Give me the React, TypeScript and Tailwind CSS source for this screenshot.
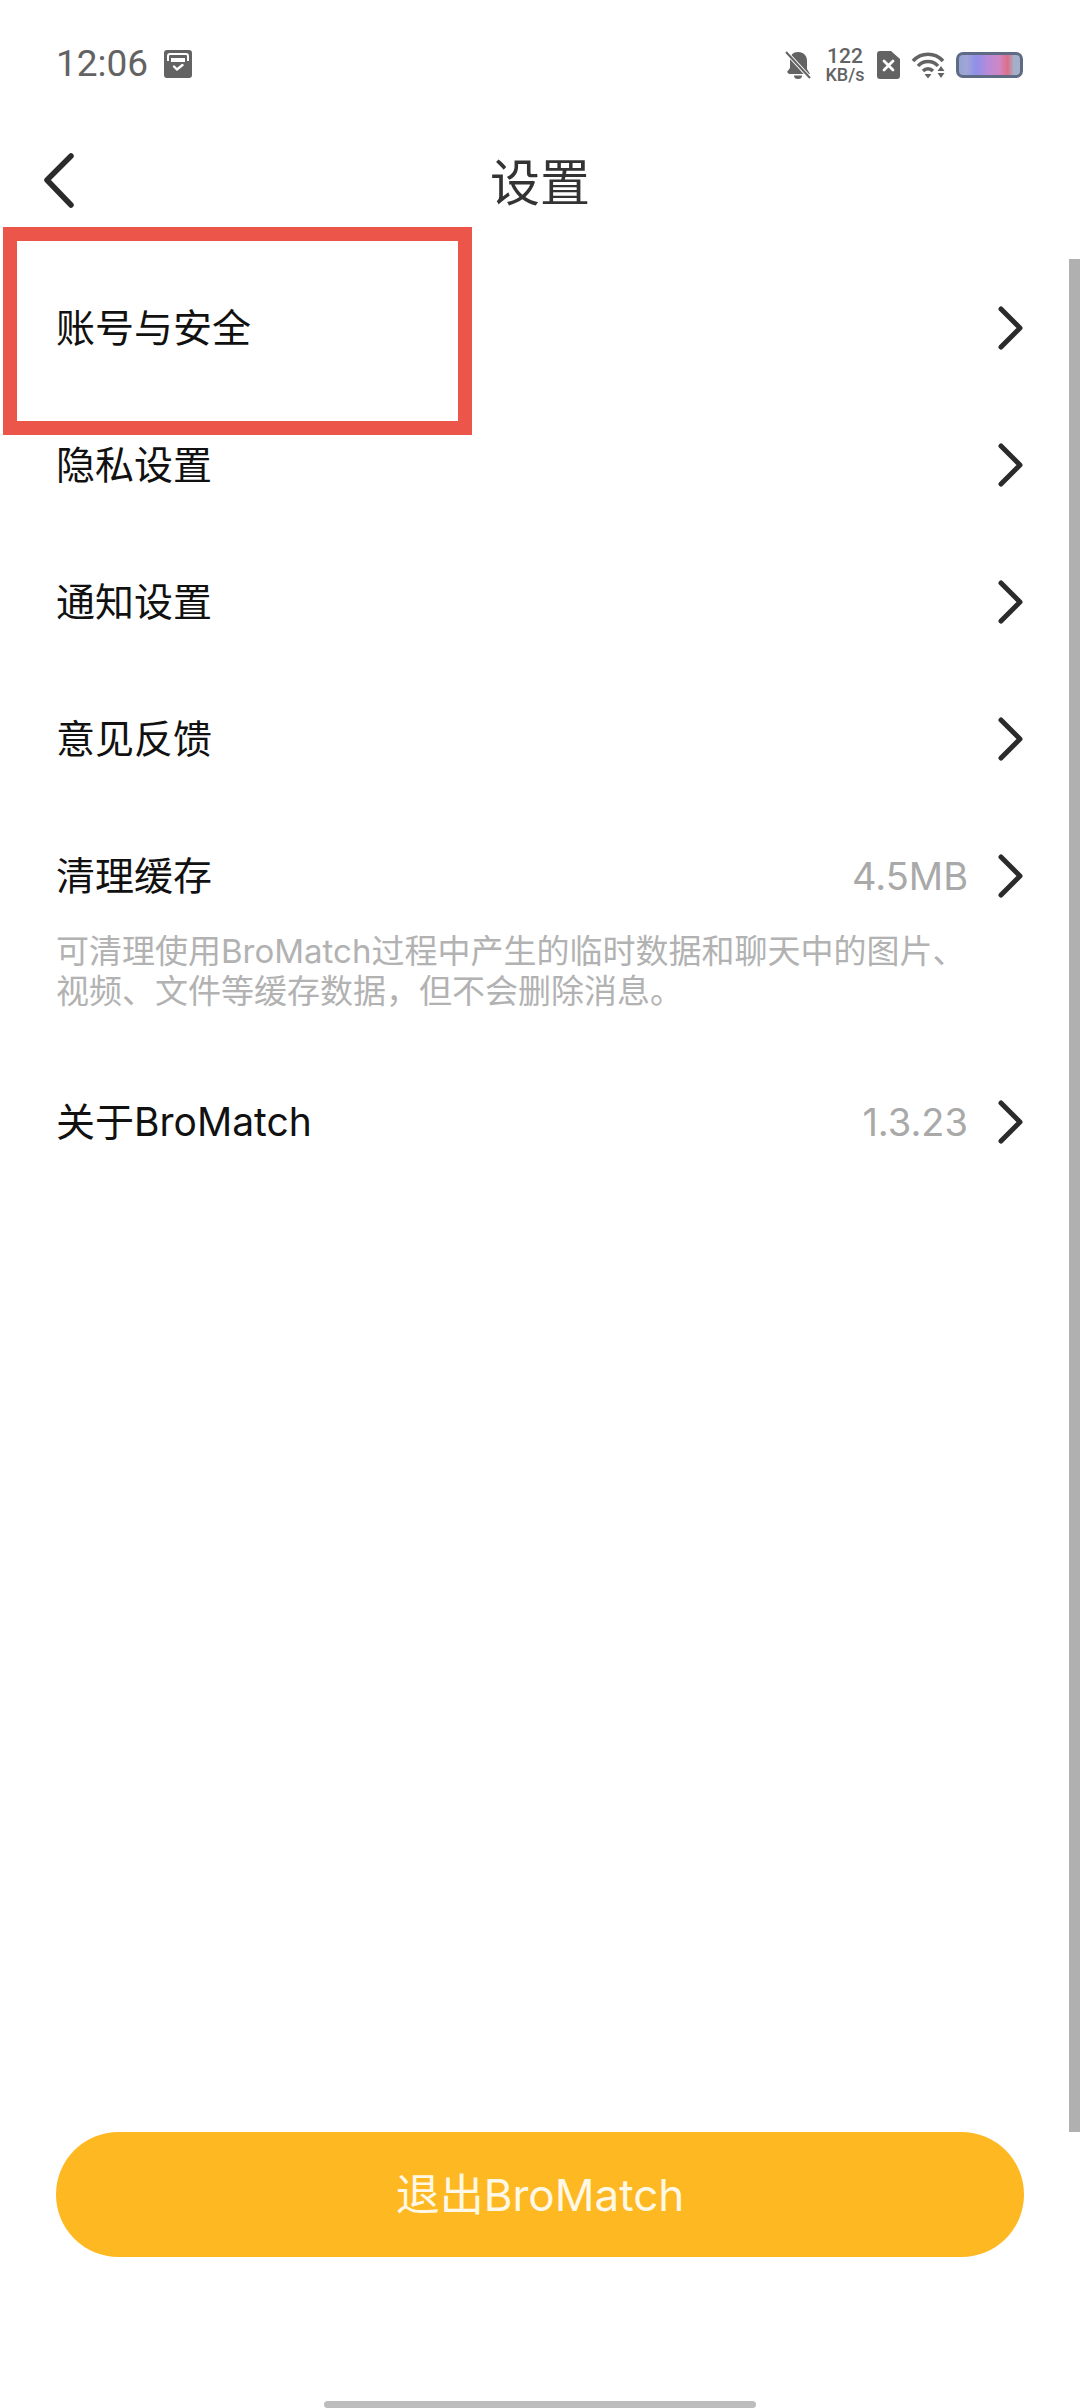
import type { ReactNode } from "react";

const fontStack = "font-['Inter','Noto_Sans_CJK_SC',sans-serif]";

function Chevron() {
  return (
    <svg width="26" height="44" viewBox="0 0 26 44" fill="none" className="shrink-0">
      <path d="M3 3 L22 22 L3 41" stroke="#2b2b2b" strokeWidth="5" strokeLinecap="round" strokeLinejoin="round" />
    </svg>
  );
}

function AppBadgeIcon() {
  return (
    <svg width="28" height="28" viewBox="0 0 28 28" className="ml-[16px]">
      <rect width="28" height="28" rx="3" fill="#636363" />
      <path d="M4 11 V6 a2 2 0 0 1 2-2 H22 a2 2 0 0 1 2 2 V11" fill="none" stroke="#fff" strokeWidth="2" />
      <rect x="7" y="8" width="14" height="4" fill="#fff" />
      <path d="M10 16.5 L13 19.5 L18.5 15" fill="none" stroke="#fff" strokeWidth="2.4" strokeLinecap="round" />
    </svg>
  );
}

function MutedBellIcon() {
  return (
    <svg width="26" height="28" viewBox="0 0 26 28">
      <path d="M13 1 C19 1 22 5 22 10 V18 L25 23 H4 L2 21 L5 17 V9 C5 4 8 1 13 1 Z M9 24.500 H17 A4 3.500 0 0 1 9 24.500 Z" fill="#636363" />
      <path d="M1 1 L25 27" stroke="#fff" strokeWidth="4" />
      <path d="M1 1 L25 27" stroke="#636363" strokeWidth="2" />
    </svg>
  );
}

function SimOffIcon() {
  return (
    <svg width="23" height="28" viewBox="0 0 23 28">
      <path d="M3 0 H14 L23 8 V25 a3 3 0 0 1-3 3 H3 a3 3 0 0 1-3-3 V3 a3 3 0 0 1 3-3 Z" fill="#636363" />
      <path d="M7 10 L16 19 M16 10 L7 19" stroke="#fff" strokeWidth="2.800" strokeLinecap="round" />
    </svg>
  );
}

function WifiIcon() {
  return (
    <svg width="35" height="28" viewBox="0 0 35 28" fill="none">
      <path d="M2 10 C10 1 24 1 32 10" stroke="#636363" strokeWidth="3.500" />
      <path d="M7 15 C12 9 22 9 27 15" stroke="#636363" strokeWidth="3.500" />
      <path d="M12 20 C15 17 19 17 22 20" stroke="#636363" strokeWidth="3.500" />
      <path d="M13.500 23 H20.500 L17 27.500 Z" fill="#636363" />
      <path d="M30 15 L33.500 20 H26.500 Z M26.500 22 H33.500 L30 27 Z" fill="#636363" />
    </svg>
  );
}

function Battery() {
  return (
    <div className="ml-[10px] h-[26px] w-[67px] rounded-[7px] border-[3px] border-[#5f6b85] bg-[linear-gradient(90deg,#94a3cf_0%,#a0a6d8_12%,#8f8fe8_28%,#b98ad8_48%,#cf86c4_66%,#dd6f86_80%,#a3b0c8_90%)]" />
  );
}

function StatusBar() {
  return (
    <div className="flex h-[115px] items-start justify-between pl-[56px] pr-[57px] pt-[47px]">
      <div className="flex items-center">
        <span className="text-[37px] leading-[34px] font-normal text-[#636363] font-['Roboto',sans-serif]">12:06</span>
        <AppBadgeIcon />
      </div>
      <div className="flex items-center">
        <MutedBellIcon />
        <div className="ml-[14px] flex w-[40px] flex-col items-center font-['Roboto',sans-serif] font-medium text-[#636363]">
          <span className="text-[21px] leading-[19px]">122</span>
          <span className="text-[18px] leading-[17px]">KB/s</span>
        </div>
        <div className="ml-[12px]">
          <SimOffIcon />
        </div>
        <div className="ml-[11px]">
          <WifiIcon />
        </div>
        <Battery />
      </div>
    </div>
  );
}

function NavBar() {
  return (
    <div className="relative flex h-[136px] items-center justify-center">
      <button className="absolute left-[44px] top-[38px]">
        <svg width="30" height="56" viewBox="0 0 30 56" fill="none">
          <path d="M27 3 L3 27 L27 52" stroke="#2b2b2b" strokeWidth="5.500" strokeLinecap="round" strokeLinejoin="round" />
        </svg>
      </button>
      <h1 className="text-[50px] leading-none font-normal text-[#333333]">设置</h1>
    </div>
  );
}

type SettingRowProps = {
  label: string;
  value?: string;
  children?: ReactNode;
};

function SettingRow({ label, value, children }: SettingRowProps) {
  return (
    <div className="px-[56px]">
      <div className="flex h-[137px] items-center">
        <span className="text-[39px] leading-none text-[#111111]">{label}</span>
        {value && <span className="ml-auto mr-[30px] text-[38px] leading-none text-[#a9a9a9]">{value}</span>}
        <span className={value ? "" : "ml-auto"}>
          <Chevron />
        </span>
      </div>
      {children}
    </div>
  );
}

export default function App() {
  return (
    <div className={`relative flex h-[2408px] w-[1080px] flex-col overflow-hidden bg-white ${fontStack}`}>
      <StatusBar />
      <NavBar />

      <div className="pt-[8px]">
        <SettingRow label="账号与安全" />
        <SettingRow label="隐私设置" />
        <SettingRow label="通知设置" />
        <SettingRow label="意见反馈" />
        <SettingRow label="清理缓存" value="4.5MB">
          <p className="-mt-[13px] mb-[42px] w-[930px] text-[33px] leading-[40px] text-[#b2b2b2]">
            可清理使用BroMatch过程中产生的临时数据和聊天中的图片、视频、文件等缓存数据，但不会删除消息。
          </p>
        </SettingRow>
        <SettingRow label="关于BroMatch" value="1.3.23" />
      </div>

      <div className="mt-auto px-[56px]">
        <button className="flex h-[125px] w-full items-center justify-center rounded-full bg-[#feb822] text-[44px] leading-none text-[#fff8e6]">
          退出BroMatch
        </button>
      </div>

      <div className="mx-auto mt-[144px] h-[7px] w-[432px] rounded-[4px] bg-[#bdbdbd]" />

      {/* scroll indicator and the highlight frame sit over the list */}
      <div className="absolute right-0 top-[259px] h-[1873px] w-[11px] bg-[#b0b0b0]" />
      <div className="absolute left-[3px] top-[227px] h-[208px] w-[469px] border-[14px] border-[#ec5549]" />
    </div>
  );
}
